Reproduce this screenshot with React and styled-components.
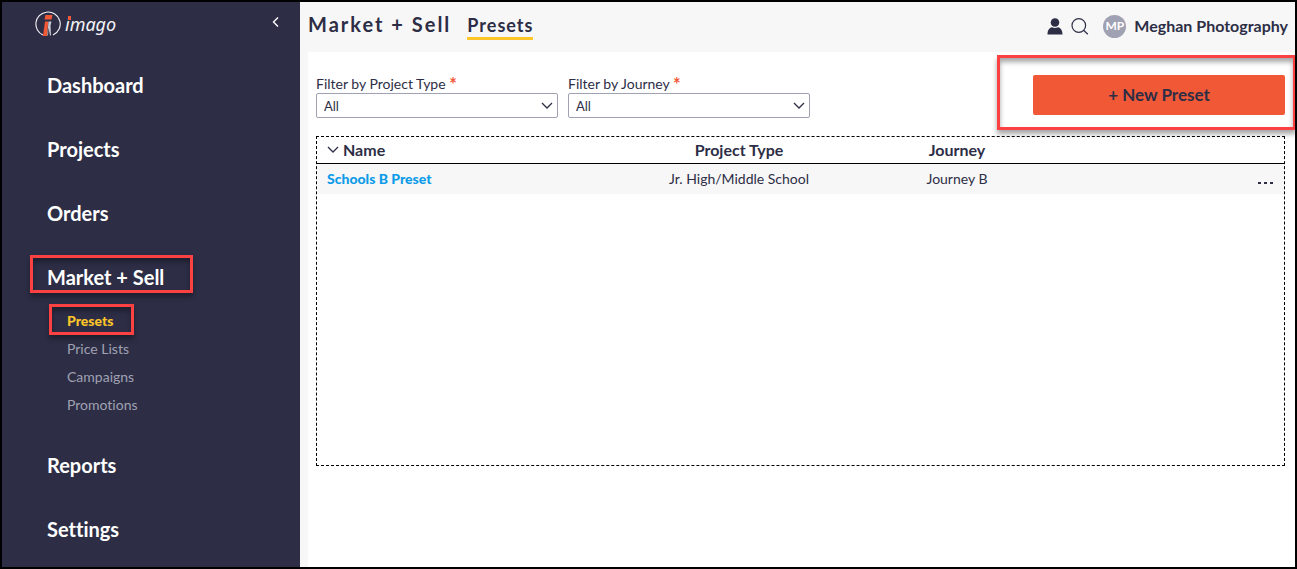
import React from 'react'
import styled, { createGlobalStyle, css } from 'styled-components';

const GlobalStyle = createGlobalStyle`
    * {
        box-sizing: border-box;
    }
    body {
        margin: 0;
        color: #2d2e46;
        background: #fff;
        font-family: Lato, "Liberation Sans", sans-serif;
        font-size: 14px;
        font-variant-ligatures: none;
    }
    a {
        text-decoration: none;
    }
    button, select {
        font-family: inherit;
        color: inherit;
    }
`

// red callout frame drawn round an element
const callout = css`
    position: relative;
    &::after {
        content: '';
        position: absolute;
        inset: ${props => props.$inset};
        border: 3px solid #fb4141;
        box-shadow: 0 4px 5px rgba(0, 0, 0, 0.35), inset 0 4px 5px rgba(0, 0, 0, 0.35);
        pointer-events: none;
    }
`

const Page = styled.div`
    display: flex;
    min-height: 100vh;
    border: 2px solid #000;
    overflow: hidden;
`
const Sidebar = styled.aside`
    flex: 0 0 298px;
    background: #2d2e46;
`
const Brand = styled.div`
    display: flex;
    justify-content: space-between;
    align-items: flex-start;
    height: 67px;
    padding: 8px 16px 0 33px;
`
const Logo = styled.a`
    display: flex;
    align-items: center;
    gap: 4px;
    color: #f4f4f6;
    font-family: "Noto Sans", "Open Sans", sans-serif;
    font-size: 18px;
    font-style: italic;
    line-height: 28px;
`
const Wordmark = styled.span`
    position: relative;
    &::before {
        content: '';
        position: absolute;
        left: 3px;
        top: 6px;
        width: 3px;
        height: 4px;
        background: #f15836;
    }
`
const IconButton = styled.button`
    display: flex;
    padding: 0;
    border: 0;
    background: none;
    color: ${props => props.$color || 'inherit'};
    cursor: pointer;
`
const Collapse = styled(IconButton)`
    padding-top: 6px;
`
const NavList = styled.ul`
    display: flex;
    flex-direction: column;
    gap: 32px;
    margin: 0;
    padding: 0 0 0 45px;
    list-style: none;
`
const NavLink = styled.a`
    display: inline-block;
    color: #fff;
    font-size: 20px;
    font-weight: 700;
    line-height: 32px;
    ${props => props.$inset && callout}
`
const SubList = styled.ul`
    margin: 14px 0 -2px;
    padding: 0 0 0 20px;
    list-style: none;
    line-height: 28px;
`
const SubLink = styled.a`
    display: inline-block;
    color: ${props => props.$active ? '#ffc629' : '#a0a1b2'};
    font-weight: ${props => props.$active ? 900 : 400};
    ${props => props.$inset && callout}
`
const Main = styled.main`
    flex: 1;
    min-width: 0;
    display: flex;
    flex-direction: column;
    background: #f7f7f7;
`
const TopBar = styled.header`
    display: flex;
    justify-content: space-between;
    align-items: flex-start;
    height: 50px;
    padding: 0 7px 0 8px;
`
const Titles = styled.div`
    display: flex;
    align-items: center;
    gap: 16px;
    height: 44px;
`
const Title = styled.h1`
    margin: 0;
    font-size: 20px;
    font-weight: 700;
    letter-spacing: 2px;
`
const Tab = styled.a`
    margin-top: 5px;
    border-bottom: 3px solid #ffc629;
    color: inherit;
    font-size: 18px;
    font-weight: 700;
    letter-spacing: 1px;
    line-height: 24px;
`
const Account = styled.div`
    display: flex;
    align-items: center;
    gap: 8px;
    height: 50px;
    font-size: 16px;
    font-weight: 700;
    line-height: 20px;
    padding-bottom: 2px;
`
const Avatar = styled.span`
    display: flex;
    justify-content: center;
    align-items: center;
    width: 23px;
    height: 23px;
    margin-left: 6px;
    border-radius: 50%;
    background: #a0a1b2;
    color: #fff;
    font-size: 12px;
`
const Content = styled.section`
    flex: 1;
    margin-left: 8px;
    padding: 23px 10px 20px 8px;
    background: #fff;
`
const Tools = styled.div`
    display: flex;
    align-items: flex-start;
    gap: 10px;
    margin-bottom: 18px;
`
const Field = styled.div`
    width: 242px;
`
const Label = styled.label`
    display: block;
    line-height: 18px;
`
const Required = styled.span`
    color: #f15836;
    font-size: 18px;
    font-weight: 700;
    line-height: 1;
    vertical-align: top;
`
const SelectBox = styled.div`
    position: relative;
    svg {
        position: absolute;
        top: 8px;
        right: 5px;
        pointer-events: none;
    }
`
const Select = styled.select`
    appearance: none;
    display: block;
    width: 100%;
    height: 25px;
    padding: 0 24px 0 7px;
    border: 1px solid #a0a1b2;
    border-radius: 2px;
    background: #fff;
    font-size: 13px;
`
const NewButton = styled.button`
    width: 252px;
    height: 40px;
    margin-left: auto;
    padding: 0 0 2px;
    border: 0;
    border-radius: 2px;
    background: #f15836;
    font-size: 17px;
    font-weight: 700;
    cursor: pointer;
    ${callout}
`
const TableFrame = styled.div`
    min-height: 330px;
    border: 1px dashed #000;
`
const Table = styled.table`
    width: 100%;
    border-spacing: 0;
    table-layout: fixed;
`
const Th = styled.th`
    width: ${props => props.$width || 'auto'};
    height: 27px;
    padding: 0 10px 1px;
    border-bottom: 1px solid #000;
    font-size: 16px;
    font-weight: 700;
    line-height: 20px;
    text-align: ${props => props.$align || 'center'};
`
const SortButton = styled.button`
    display: flex;
    align-items: center;
    gap: 4px;
    padding: 0;
    border: 0;
    background: none;
    font-size: 16px;
    font-weight: 700;
    line-height: 20px;
`
const Td = styled.td`
    height: 30px;
    padding: 0 10px;
    background: #f7f7f7;
    line-height: 20px;
    text-align: ${props => props.$align || 'center'};
`
const PresetLink = styled.a`
    color: #0c9be9;
    font-weight: 900;
`
const MoreButton = styled(IconButton)`
    margin: 8px 0 0 auto;
`

const Chevron = () => (
    <svg width="12" height="9" viewBox="0 0 12 9" fill="none" stroke="#2d2e46" strokeWidth="1.3" aria-hidden="true">
        <path d="M1 2 6 7 11 2" />
    </svg>
)

const LogoMark = () => (
    <svg width="26" height="26" viewBox="0 0 26 26" fill="none" aria-hidden="true">
        <path d="M8 24A12 12 0 0 1 11 1.2 12 12 0 0 1 18 24" stroke="#f4f4f6" strokeWidth="1.1" />
        <path d="M10.500 4H17.500L16.500 8.500H9.500z" fill="#f15836" />
        <path d="M10 10.500h3.200L12 25H8z" fill="#f15836" />
        <path d="M13.500 10.500h3l-1 4 .5 10h-1l-1.500-8-.5 8h-.7z" fill="#c9c9d2" />
    </svg>
)

const links = ['Dashboard', 'Projects', 'Orders', 'Market + Sell', 'Reports', 'Settings']
const marketLinks = ['Presets', 'Price Lists', 'Campaigns', 'Promotions']
const presets = [
    { name: 'Schools B Preset', type: 'Jr. High/Middle School', journey: 'Journey B' },
]

const Filter = ({ id, label }) => (
    <Field>
        <Label htmlFor={id}>{label} <Required>*</Required></Label>
        <SelectBox>
            <Select id={id} defaultValue="All">
                <option>All</option>
            </Select>
            <Chevron />
        </SelectBox>
    </Field>
)

const Navigation = () => (
    <Sidebar>
        <Brand>
            <Logo href="#home">
                <LogoMark />
                <Wordmark>imago</Wordmark>
            </Logo>
            <Collapse $color="#fff" aria-label="Collapse menu">
                <svg width="14" height="12" viewBox="0 0 14 12" fill="none" stroke="currentColor" strokeWidth="1.4">
                    <path d="M8 1.5 3.5 6 8 10.5" />
                </svg>
            </Collapse>
        </Brand>
        <nav>
            <NavList>
                {links.map(link => (
                    <li key={link}>
                        <NavLink href="#nav" $inset={link === 'Market + Sell' && '-6px -29px 0 -17px'}>{link}</NavLink>
                        {link === 'Market + Sell' && (
                            <SubList>
                                {marketLinks.map((sub, i) => (
                                    <li key={sub}>
                                        <SubLink href="#sub" $active={i === 0} $inset={i === 0 && '-3px -21px 0 -18px'}>{sub}</SubLink>
                                    </li>
                                ))}
                            </SubList>
                        )}
                    </li>
                ))}
            </NavList>
        </nav>
    </Sidebar>
)

const App = () => {
    return (
        <>
            <GlobalStyle />
            <Page>
                <Navigation />
                <Main>
                    <TopBar>
                        <Titles>
                            <Title>Market + Sell</Title>
                            <Tab href="#presets">Presets</Tab>
                        </Titles>
                        <Account>
                            <IconButton aria-label="Profile">
                                <svg width="16" height="17" viewBox="0 0 16 17" fill="currentColor">
                                    <circle cx="8" cy="4.5" r="4.3" />
                                    <path d="M.5 16.5c0-4.5 1.8-6.5 4.5-7.3 1.800 1 4.200 1 6 0 2.700.8 4.500 2.800 4.500 7.300z" />
                                </svg>
                            </IconButton>
                            <IconButton aria-label="Search">
                                <svg width="18" height="17" viewBox="0 0 18 17" fill="none" stroke="currentColor" strokeWidth="1.2">
                                    <circle cx="7.8" cy="7.5" r="6.8" />
                                    <path d="m12.6 12.3 4.200 4" />
                                </svg>
                            </IconButton>
                            <Avatar>MP</Avatar>
                            <span>Meghan Photography</span>
                        </Account>
                    </TopBar>
                    <Content>
                        <Tools>
                            <Filter id="project-type" label="Filter by Project Type" />
                            <Filter id="journey" label="Filter by Journey" />
                            <NewButton $inset="-20px -11px -15px -36px">+ New Preset</NewButton>
                        </Tools>
                        <TableFrame>
                            <Table>
                                <thead>
                                    <tr>
                                        <Th $align="left"><SortButton><Chevron />Name</SortButton></Th>
                                        <Th $width="218px">Project Type</Th>
                                        <Th $width="218px">Journey</Th>
                                        <Th $width="218px" aria-label="Actions" />
                                    </tr>
                                </thead>
                                <tbody>
                                    {presets.map(preset => (
                                        <tr key={preset.name}>
                                            <Td $align="left"><PresetLink href="#preset">{preset.name}</PresetLink></Td>
                                            <Td>{preset.type}</Td>
                                            <Td>{preset.journey}</Td>
                                            <Td>
                                                <MoreButton aria-label="More actions">
                                                    <svg width="17" height="4" viewBox="0 0 17 4" fill="currentColor">
                                                        <path d="M1 1h3v2H1zM7 1h3v2H7zM13 1h3v2h-3z" />
                                                    </svg>
                                                </MoreButton>
                                            </Td>
                                        </tr>
                                    ))}
                                </tbody>
                            </Table>
                        </TableFrame>
                    </Content>
                </Main>
            </Page>
        </>
    )
}

export default App
